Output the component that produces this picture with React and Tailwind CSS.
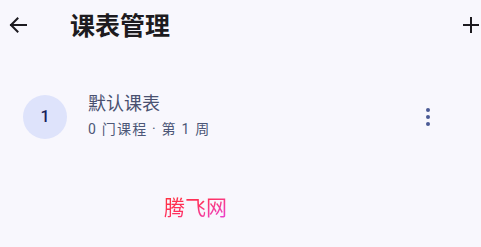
import React from 'react';

const font = { fontFamily: 'Roboto, "Noto Sans CJK SC", "Noto Sans", sans-serif' };

const ArrowBack = () => (
  <svg width="20" height="20" viewBox="0 0 20 20" fill="none" stroke="#1d1b20" strokeWidth="2" strokeLinecap="square">
    <path d="M18 10H3" />
    <path d="M9.5 3.5L3 10l6.5 6.5" />
  </svg>
);

const Plus = () => (
  <svg width="18" height="18" viewBox="0 0 18 18" fill="none" stroke="#1d1b20" strokeWidth="2">
    <path d="M9 1v16M1 9h16" />
  </svg>
);

const Kebab = () => (
  <div className="flex flex-col items-center gap-[3px]">
    <span className="w-[4px] h-[4px] rounded-full bg-[#4b5a95]" />
    <span className="w-[4px] h-[4px] rounded-full bg-[#4b5a95]" />
    <span className="w-[4px] h-[4px] rounded-full bg-[#4b5a95]" />
  </div>
);

export default function App() {
  return (
    <div className="w-[481px] h-[247px] bg-[#f8f7fd] overflow-hidden" style={font}>
      {/* top bar */}
      <header className="h-[50px] flex items-center">
        <div className="w-[70px] pl-[8px] flex items-center">
          <ArrowBack />
        </div>
        <h1 className="text-[25px] font-bold text-[#1d1b20] leading-none mt-[2px]">课表管理</h1>
        <div className="ml-auto pr-[1px] flex items-center">
          <Plus />
        </div>
      </header>

      {/* schedule list */}
      <div className="mt-[29px] h-[72px] flex items-center pl-[23px] pr-[51px]">
        <div className="w-[44px] h-[44px] rounded-full bg-[#dee3fb] flex items-center justify-center text-[16px] font-medium text-[#14215a] mt-[4px]">
          1
        </div>
        <div className="ml-[21px] flex flex-col">
          <span className="text-[18px] leading-[24px] text-[#4a5170]">默认课表</span>
          <span className="text-[14px] leading-[20px] tracking-[1.2px] text-[#4d5778] mt-[3px]">0 门课程 · 第 1 周</span>
        </div>
        <div className="ml-auto mt-[4px]">
          <Kebab />
        </div>
      </div>

      {/* watermark */}
      <div className="mt-[40px] pl-[164px]">
        <span className="text-[21px] leading-[30px] bg-gradient-to-br from-[#ff3030] via-[#ff3060] to-[#e83ae0] bg-clip-text text-transparent" style={{ fontFamily: '"Noto Sans CJK SC", sans-serif' }}>
          腾飞网
        </span>
      </div>
    </div>
  );
}
